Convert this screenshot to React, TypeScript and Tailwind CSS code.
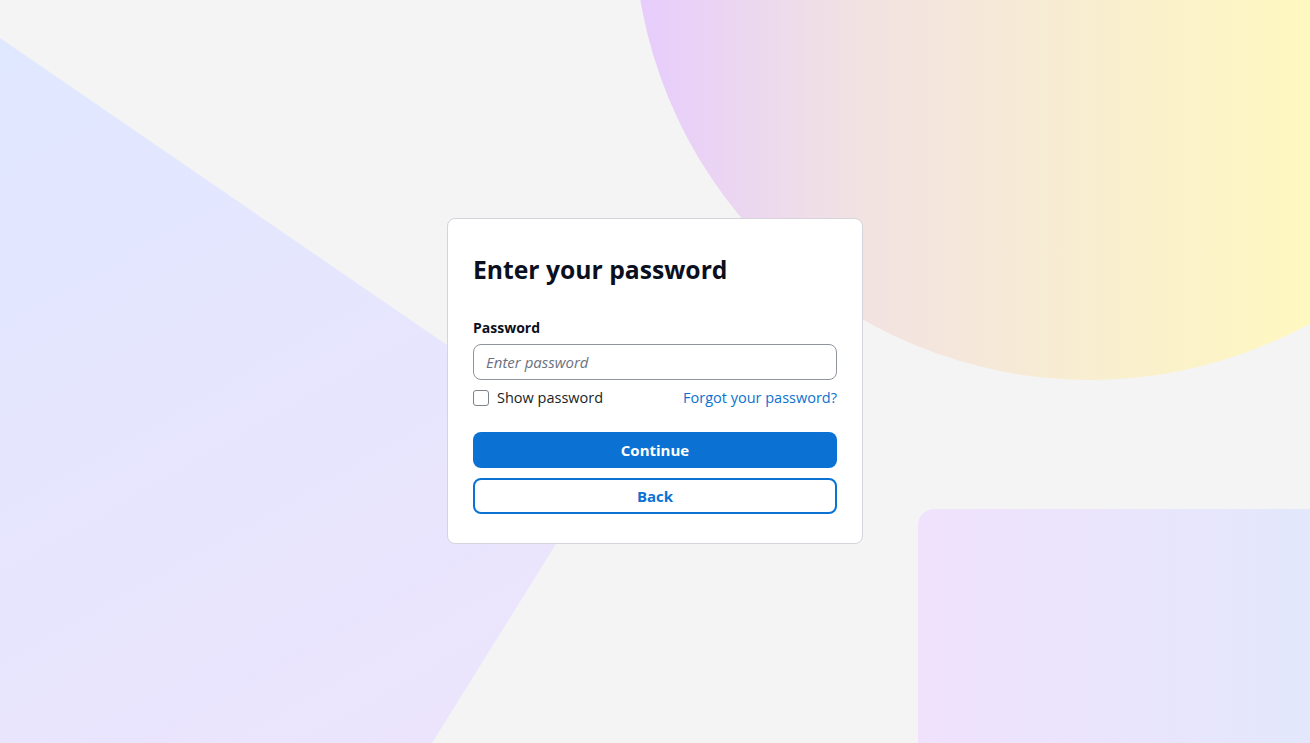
import React from "react";

export default function App() {
  return (
    <div
      className="relative w-full h-[743px] overflow-hidden bg-[#f4f4f4]"
      style={{ fontFamily: '"Open Sans", "Noto Sans", sans-serif' }}
    >
      {/* decorative background shapes */}
      <div
        className="absolute inset-0 bg-gradient-to-br from-[#dfe8ff] to-[#f2e2fc]"
        style={{ clipPath: "polygon(0 38px, 610px 457px, 432px 743px, 0 743px)" }}
      />
      <div className="absolute left-[634px] top-[-532px] w-[912px] h-[912px] rounded-full bg-[linear-gradient(to_right,#e6ccfd_0%,#f2e2e2_25%,#f8eed0_50%,#fff8c0_74%)]" />
      <div className="absolute left-[918px] top-[509px] w-[420px] h-[260px] rounded-[16px] bg-gradient-to-r from-[#f0e2fc] to-[#e2e8fc]" />

      {/* card */}
      <div className="relative flex justify-center pt-[218px]">
        <div className="w-[416px] bg-white border border-[#d4d4da] rounded-[8px] px-[25px] pt-[34px] pb-[29px]">
          <h1 className="text-[24.7px] leading-[34px] font-bold text-[#0b1020]">Enter your password</h1>
          <label className="block mt-[31px] text-[14px] leading-[20px] font-bold text-[#0b1020]">Password</label>
          <div className="mt-[6px] h-[36px] rounded-[8px] border border-[#8e939c] flex items-center px-[12px]">
            <span className="italic text-[15px] text-[#6b7280]">Enter password</span>
          </div>
          <div className="mt-[8px] flex items-center justify-between h-[20px]">
            <div className="flex items-center gap-[8px]">
              <span className="w-[16px] h-[16px] rounded-[3px] border border-[#7d828a] bg-white" />
              <span className="text-[14.5px] text-[#1a1d24]">Show password</span>
            </div>
            <span className="text-[14.5px] text-[#0b72d0]">Forgot your password?</span>
          </div>
          <button className="mt-[24px] w-full h-[36px] rounded-[8px] bg-[#0b72d4] text-white text-[15px] font-bold flex items-center justify-center">
            Continue
          </button>
          <button className="mt-[10px] w-full h-[36px] rounded-[8px] border-2 border-[#0b72d4] bg-white text-[#0b72d4] text-[15px] font-bold flex items-center justify-center">
            Back
          </button>
        </div>
      </div>
    </div>
  );
}
